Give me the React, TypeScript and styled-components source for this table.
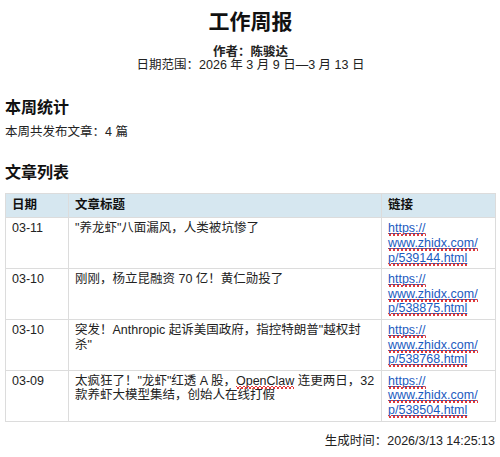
import React from "react";
import styled, { createGlobalStyle } from "styled-components";

const Global = createGlobalStyle`
  html, body { margin: 0; padding: 0; background: #fff; }
  body {
    font-family: "Liberation Sans", "Noto Sans CJK SC", sans-serif;
    font-size: 12.5px;
    color: #222;
  }
`;

const Page = styled.div`
  padding: 5px 4px 5px 5px;
`;

const Header = styled.header`
  text-align: center;
`;

const Title = styled.h1`
  font-size: 21px;
  font-weight: bold;
  margin: 4px 0 11px;
  line-height: 26px;
  color: #111;
`;

const Meta = styled.div`
  line-height: 13px;
`;

const Author = styled.div`
  font-weight: bold;
`;

const SectionTitle = styled.h2`
  font-size: 16px;
  font-weight: bold;
  margin: 0;
  line-height: 20px;
  color: #111;
`;

const Section = styled.section<{ $top: number }>`
  margin-top: ${(p) => p.$top}px;
`;

const Para = styled.p`
  margin: 6px 0 0;
  line-height: 16px;
`;

const Table = styled.table`
  width: 100%;
  border-collapse: collapse;
  table-layout: fixed;
  margin-top: 10px;
`;

const Th = styled.th`
  background: #d6e7f0;
  text-align: left;
  font-weight: bold;
  color: #111;
  border: 1px solid #dcdcdc;
  padding: 4px 6px;
  line-height: 15px;
`;

const Td = styled.td`
  border: 1px solid #dcdcdc;
  padding: 3px 6px 2.5px;
  line-height: 14.8px;
  vertical-align: top;
`;

const Link = styled.a`
  color: #1c5bbf;
  text-decoration: underline;
`;

/* red spell-check squiggle drawn under a word */
const Spell = styled.span`
  position: relative;
  &::after {
    content: "";
    position: absolute;
    left: 0;
    right: 0;
    bottom: -1px;
    height: 3px;
    background-image:
      linear-gradient(45deg, transparent 35%, #e23a3a 35%, #e23a3a 55%, transparent 55%),
      linear-gradient(-45deg, transparent 35%, #e23a3a 35%, #e23a3a 55%, transparent 55%);
    background-size: 4px 3px;
    background-repeat: repeat-x;
    pointer-events: none;
  }
`;

const Footer = styled.div`
  text-align: right;
  margin-top: 11px;
  line-height: 16px;
  padding-right: 1px;
`;

type Row = { date: string; title: React.ReactNode; id: string };

const rows: Row[] = [
  { date: "03-11", title: "\"养龙虾\"八面漏风，人类被坑惨了", id: "539144" },
  { date: "03-10", title: "刚刚，杨立昆融资 70 亿！黄仁勋投了", id: "538875" },
  { date: "03-10", title: "突发！Anthropic 起诉美国政府，指控特朗普\"越权封杀\"", id: "538768" },
  {
    date: "03-09",
    title: (
      <>
        太疯狂了！"龙虾"红透 A 股，<Spell>OpenClaw</Spell> 连更两日，32 款养虾大模型集结，创始人在线打假
      </>
    ),
    id: "538504",
  },
];

export default function App() {
  return (
    <>
      <Global />
      <Page>
        <Header>
          <Title>工作周报</Title>
          <Meta>
            <Author>作者：陈骏达</Author>
            <div>日期范围：2026 年 3 月 9 日—3 月 13 日</div>
          </Meta>
        </Header>
        <Section $top={26}>
          <SectionTitle>本周统计</SectionTitle>
          <Para>本周共发布文章：4 篇</Para>
        </Section>
        <Section $top={23}>
          <SectionTitle>文章列表</SectionTitle>
          <Table>
            <colgroup>
              <col style={{ width: 63 }} />
              <col />
              <col style={{ width: 114 }} />
            </colgroup>
            <thead>
              <tr>
                <Th>日期</Th>
                <Th>文章标题</Th>
                <Th>链接</Th>
              </tr>
            </thead>
            <tbody>
              {rows.map((r) => (
                <tr key={r.id}>
                  <Td>{r.date}</Td>
                  <Td>{r.title}</Td>
                  <Td>
                    <Link href={`https://www.zhidx.com/p/${r.id}.html`}>
                      <Spell>https://</Spell>{" "}
                      <Spell>www.zhidx.com/</Spell> <Spell>p/{r.id}.html</Spell>
                    </Link>
                  </Td>
                </tr>
              ))}
            </tbody>
          </Table>
        </Section>
        <Footer>生成时间：2026/3/13 14:25:13</Footer>
      </Page>
    </>
  );
}
